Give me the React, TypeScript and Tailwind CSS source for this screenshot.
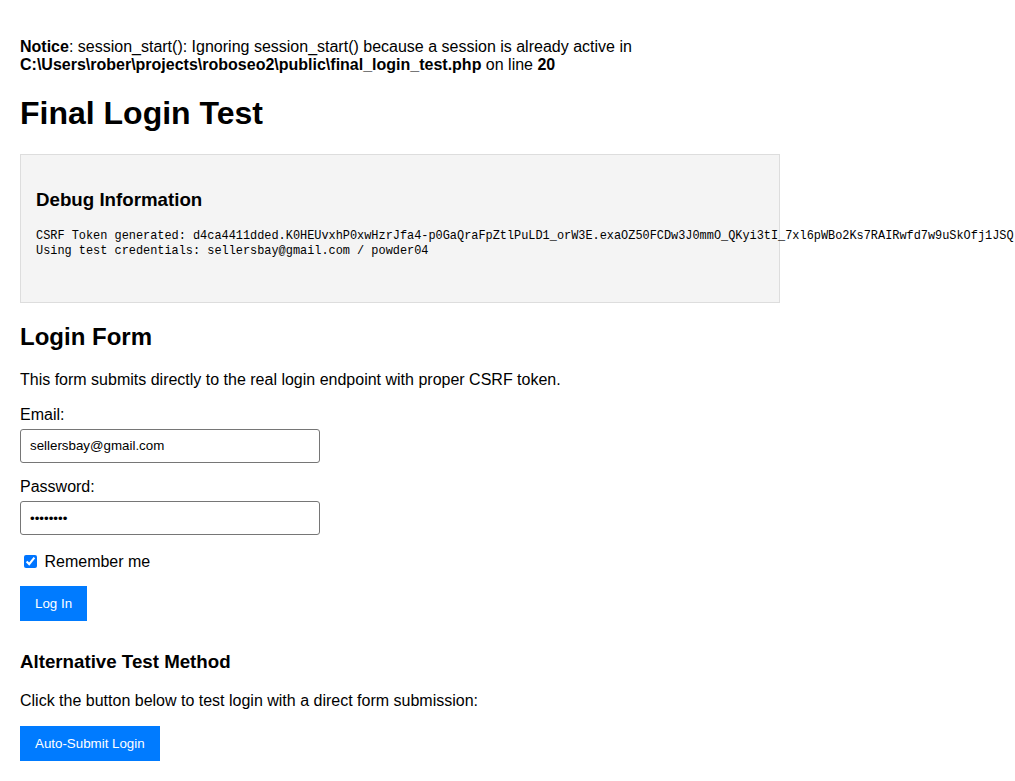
import React from "react";

export default function App() {
  const token =
    "d4ca4411dded.K0HEUvxhP0xwHzrJfa4-p0GaQraFpZtlPuLD1_orW3E.exaOZ50FCDw3J0mmO_QKyi3tI_7xl6pWBo2Ks7RAIRwfd7w9uSkOfj1JSQ";
  const inputCls =
    "block w-[300px] h-[34px] px-[9px] border border-[#767676] rounded-[3px] bg-white text-black text-[13.33px] leading-[16px] font-['Liberation_Sans',Arial,sans-serif]";
  const btnCls =
    "inline-block bg-[#007bff] text-white px-[15px] py-[10px] text-[13.33px] leading-[15px] font-['Liberation_Sans',Arial,sans-serif]";
  return (
    <div className="min-h-screen w-full overflow-hidden bg-white p-5 text-black text-[16px] leading-[18px] font-['Liberation_Sans',Arial,sans-serif]">
      <br />
      <b>Notice</b>: session_start(): Ignoring session_start() because a session is already active in{" "}
      <b>{"C:\\Users\\rober\\projects\\roboseo2\\public\\final_login_test.php"}</b> on line <b>20</b>
      <br />
      <h1 className="text-[32px] leading-[37px] font-bold my-[21.44px]">Final Login Test</h1>
      <div className="w-[760px] border border-[#dddddd] bg-[#f4f4f4] p-[15px]">
        <h3 className="text-[18.72px] leading-[21.5px] font-bold my-[18.72px]">Debug Information</h3>
        <pre className="my-[13px] whitespace-pre text-[11.9px] leading-[15px] font-['Liberation_Mono','DejaVu_Sans_Mono',monospace]">
          {"CSRF Token generated: " + token + "\nUsing test credentials: sellersbay@gmail.com / powder04\n\n"}
        </pre>
      </div>
      <h2 className="text-[24px] leading-[28.5px] font-bold my-[19.92px]">Login Form</h2>
      <p className="my-4 leading-[18.4px]">
        This form submits directly to the real login endpoint with proper CSRF token.
      </p>
      <form onSubmit={(e) => e.preventDefault()}>
        <div className="mb-[15px]">
          <label className="block mb-[5px] leading-[18.4px]">Email:</label>
          <input type="email" readOnly defaultValue="sellersbay@gmail.com" className={inputCls} />
        </div>
        <div className="mb-[15px]">
          <label className="block mb-[5px] leading-[18.4px]">Password:</label>
          <input type="password" readOnly defaultValue="powder04" className={inputCls} />
        </div>
        <div className="mb-[15px] h-[21px] leading-[23px]">
          <label>
            <input
              type="checkbox"
              defaultChecked
              className="ml-[4px] mr-[3px] my-[3px] w-[13px] h-[13px] align-[-1px]"
            />{" "}
            Remember me
          </label>
        </div>
        <button type="submit" className={btnCls}>
          Log In
        </button>
      </form>
      <div className="mt-[30px]">
        <h3 className="text-[18.72px] leading-[21.5px] font-bold my-[18.72px]">Alternative Test Method</h3>
        <p className="my-4 leading-[18.4px]">Click the button below to test login with a direct form submission:</p>
        <div>
          <button type="button" className={btnCls}>
            Auto-Submit Login
          </button>
        </div>
      </div>
    </div>
  );
}
